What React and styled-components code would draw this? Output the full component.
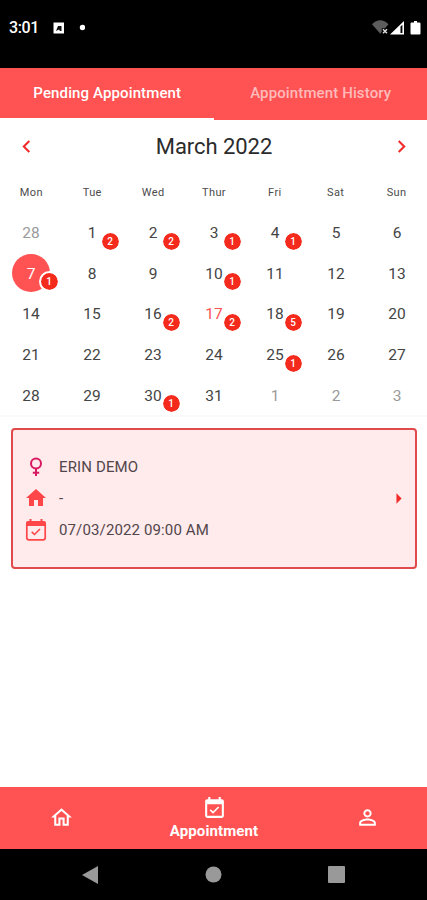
// =====================
// App.jsx
// Appointment screen: tabs, month calendar with badges, appointment card, bottom nav
// =====================

import React, { useState } from 'react';
import styled, { createGlobalStyle } from 'styled-components';
import {
  MdChevronLeft,
  MdChevronRight,
  MdHome,
  MdOutlineHome,
  MdPersonOutline,
  MdEventAvailable,
  MdArrowRight,
} from 'react-icons/md';

// --- Colours ---
const colors = {
  primary: '#ff5252',
  badge: '#f32a1c',
  arrow: '#f22b2b',
  cardBg: '#ffeaec',
  cardBorder: '#e04a4c',
  female: '#d81b60',
  text: '#444',
  muted: '#9a9a9a',
};

const GlobalStyle = createGlobalStyle`
  * { box-sizing: border-box; }
  body {
    margin: 0;
    background: #fff;
    font-family: Roboto, 'Liberation Sans', sans-serif;
  }
  button {
    font: inherit;
    color: inherit;
    background: none;
    border: none;
    padding: 0;
  }
  svg { display: block; flex-shrink: 0; }
`;

const Screen = styled.div`
  width: 427px;
  height: 900px;
  display: flex;
  flex-direction: column;
  overflow: hidden;
  background: #fff;
`;

// --- Android status bar ---
const StatusBar = styled.header`
  height: 68px;
  flex-shrink: 0;
  display: flex;
  align-items: flex-start;
  justify-content: space-between;
  padding: 18px 6px 0 9px;
  background: #000;
  color: #fff;
`;
const StatusGroup = styled.div`
  display: flex;
  align-items: center;
  height: 20px;
`;
const Clock = styled.span`
  width: 44px;
  font-size: 16px;
  font-weight: 500;
  letter-spacing: -0.4px;
  line-height: 20px;
`;

// --- Tabs ---
const Tabs = styled.div`
  height: 52px;
  flex-shrink: 0;
  display: flex;
  background: ${colors.primary};
`;
const Tab = styled.button`
  flex: 1;
  padding-left: 1px;
  border-bottom: 2px solid ${({ $active }) => ($active ? '#fff' : 'transparent')};
  color: ${({ $active }) => ($active ? '#fff' : '#ffbaba')};
  font-size: 15px;
  font-weight: 500;
  letter-spacing: 0.12px;
`;

// --- Calendar ---
const Calendar = styled.section`
  height: 297px;
  flex-shrink: 0;
  border-bottom: 2px solid #fafafa;
`;
const MonthRow = styled.div`
  height: 53px;
  display: flex;
  align-items: center;
  justify-content: space-between;
  padding: 0 13px 0 14px;
  color: ${colors.arrow};
`;
const MonthTitle = styled.h1`
  margin: 0;
  color: #2b2b2b;
  font-size: 22px;
  font-weight: 400;
  letter-spacing: -0.05px;
`;
const Week = styled.div`
  display: grid;
  grid-template-columns: repeat(7, 1fr);
  justify-items: center;
  align-items: center;
  height: 40.6px;
`;
const WeekNames = styled(Week)`
  height: 39px;
  padding-left: 1px;
  color: #4c4c4c;
  font-size: 11px;
  letter-spacing: 0.4px;
`;
const Day = styled.div`
  position: relative;
  display: flex;
  align-items: center;
  justify-content: center;
  width: 38px;
  height: 38px;
  padding: 2px 0 0 1px;
  border-radius: 50%;
  background: ${({ $selected }) => ($selected ? colors.primary : 'transparent')};
  color: ${({ $selected, $today, $outside }) =>
    $selected ? '#fff' : $today ? colors.primary : $outside ? colors.muted : colors.text};
  font-size: 15.5px;
`;
// count of appointments, sits over the day's lower right corner
const Badge = styled.span`
  position: absolute;
  left: 27px;
  top: 17.5px;
  width: 21px;
  height: 21px;
  display: flex;
  align-items: center;
  justify-content: center;
  border: 2px solid #fff;
  border-radius: 50%;
  background: ${colors.badge};
  background-clip: padding-box;
  color: #fff;
  font-size: 10px;
  font-weight: 500;
`;

// --- Appointment card ---
const Card = styled.article`
  display: flex;
  align-items: center;
  justify-content: space-between;
  height: 141px;
  margin: 11px 10px 0 11px;
  padding: 0 4px 0 11px;
  border: 2px solid ${colors.cardBorder};
  border-radius: 4px;
  background: ${colors.cardBg};
  color: ${colors.arrow};
`;
const Line = styled.div`
  display: flex;
  align-items: center;
  gap: 11px;
  height: 31.3px;
  color: #ff4648;
`;
const IconSlot = styled.span`
  width: 24px;
  display: flex;
  justify-content: center;
`;
const LineText = styled.span`
  color: #51464a;
  font-size: 15px;
  letter-spacing: 0.13px;
`;

// --- Bottom navigation ---
const BottomNav = styled.nav`
  height: 62px;
  flex-shrink: 0;
  margin-top: auto;
  display: flex;
  justify-content: space-between;
  padding: 0 9px 0 10px;
  background: ${colors.primary};
  color: #fff;
`;
const NavItem = styled.button`
  width: 102px;
  display: flex;
  flex-direction: column;
  align-items: center;
  justify-content: center;
  padding-bottom: ${({ $active }) => ($active ? 0 : '2px')};
`;
const NavLabel = styled.span`
  font-size: 15px;
  font-weight: 700;
  letter-spacing: 0.1px;
  line-height: 18px;
  margin-top: 1px;
`;

// --- Android system buttons ---
const SystemNav = styled.footer`
  height: 51px;
  flex-shrink: 0;
  display: flex;
  align-items: center;
  justify-content: space-between;
  padding: 0 82px 0 82px;
  background: #000;
`;

const weekNames = ['Mon', 'Tue', 'Wed', 'Thur', 'Fri', 'Sat', 'Sun'];
const weeks = [
  [28, 1, 2, 3, 4, 5, 6],
  [7, 8, 9, 10, 11, 12, 13],
  [14, 15, 16, 17, 18, 19, 20],
  [21, 22, 23, 24, 25, 26, 27],
  [28, 29, 30, 31, 1, 2, 3],
];
const counts = { 1: 2, 2: 2, 3: 1, 4: 1, 7: 1, 10: 1, 16: 2, 17: 2, 18: 5, 25: 1, 30: 1 };

const isOutside = (day, row) => (row === 0 && day > 20) || (row === 4 && day < 10);

function FemaleIcon() {
  return (
    <svg width="16" height="20" viewBox="0 0 16 20" fill="none" stroke={colors.female} strokeWidth="2">
      <circle cx="8" cy="6.500" r="5" />
      <path d="M8 11.500v7.500M4.800 15.800h6.400" />
    </svg>
  );
}

function CalendarCheckIcon() {
  return (
    <svg width="22" height="24" viewBox="0 0 22 24" fill="none" stroke="currentColor">
      <rect x="1.800" y="3.800" width="18.400" height="18" rx="2" strokeWidth="1.700" />
      <path d="M1.500 3.500h19v4.500h-19z" fill="currentColor" stroke="none" />
      <path d="M5.500 1v4M16.500 1v4" strokeWidth="2" />
      <path d="M6.700 13.800l2.800 2.700 5.500-5.500" strokeWidth="1.600" />
    </svg>
  );
}

function StatusIcons() {
  return (
    <svg width="50" height="18" viewBox="0 0 50 18">
      <path d="M1 5.200C6-.1 12.500-.1 17.500 5.200L14 9.200h-3.200v3.300L9.300 14.800z" fill="#5c5c5c" />
      <path d="M12 10.200l4 4M16 10.200l-4 4" stroke="#ddd" strokeWidth="1.500" />
      <path d="M19 15.500L33 2v13.500z" fill="#fff" />
      <path d="M29.500 7.500l1.900-1.800v8.300h-1.900z" fill="#000" />
      <path d="M43 2h3v1.500h2.500a1 1 0 0 1 1 1v10a1 1 0 0 1-1 1h-8a1 1 0 0 1-1-1v-10a1 1 0 0 1 1-1H43z" fill="#fff" />
    </svg>
  );
}

function App() {
  const [tab, setTab] = useState('pending');

  return (
    <>
      <GlobalStyle />
      <Screen>
        <StatusBar>
          <StatusGroup>
            <Clock>3:01</Clock>
            <svg width="32" height="12" viewBox="0 0 32 12">
              <path d="M0.500 0.500h10.500v11H0.500z" fill="#fff" />
              <path d="M3 9L5 4h3.500v5H7L6 7.500z" fill="#111" />
              <circle cx="29.500" cy="5.500" r="2.700" fill="#fff" />
            </svg>
          </StatusGroup>
          <StatusGroup>
            <StatusIcons />
          </StatusGroup>
        </StatusBar>

        <Tabs>
          <Tab $active={tab === 'pending'} onClick={() => setTab('pending')}>Pending Appointment</Tab>
          <Tab $active={tab === 'history'} onClick={() => setTab('history')}>Appointment History</Tab>
        </Tabs>

        <Calendar>
          <MonthRow>
            <MdChevronLeft size={25} />
            <MonthTitle>March 2022</MonthTitle>
            <MdChevronRight size={25} />
          </MonthRow>
          <WeekNames>
            {weekNames.map((name) => <span key={name}>{name}</span>)}
          </WeekNames>
          {weeks.map((week, row) => (
            <Week key={row}>
              {week.map((day) => {
                const outside = isOutside(day, row);
                return (
                  <Day key={day} $outside={outside} $selected={day === 7} $today={day === 17}>
                    {day}
                    {!outside && counts[day] && <Badge>{counts[day]}</Badge>}
                  </Day>
                );
              })}
            </Week>
          ))}
        </Calendar>

        <Card>
          <div>
            <Line>
              <IconSlot><FemaleIcon /></IconSlot>
              <LineText>ERIN DEMO</LineText>
            </Line>
            <Line>
              <IconSlot><MdHome size={24} /></IconSlot>
              <LineText>-</LineText>
            </Line>
            <Line>
              <IconSlot><CalendarCheckIcon /></IconSlot>
              <LineText>07/03/2022 09:00 AM</LineText>
            </Line>
          </div>
          <MdArrowRight size={25} />
        </Card>

        <BottomNav>
          <NavItem><MdOutlineHome size={25} /></NavItem>
          <NavItem $active>
            <MdEventAvailable size={25} />
            <NavLabel>Appointment</NavLabel>
          </NavItem>
          <NavItem><MdPersonOutline size={25} /></NavItem>
        </BottomNav>

        <SystemNav>
          <svg width="17" height="20" viewBox="0 0 17 20" fill="#999"><path d="M0 10L16 1v18z" /></svg>
          <svg width="17" height="17" viewBox="0 0 17 17" fill="#999"><circle cx="8.500" cy="8.500" r="8" /></svg>
          <svg width="17" height="17" viewBox="0 0 17 17" fill="#999"><rect width="17" height="17" rx="1" /></svg>
        </SystemNav>
      </Screen>
    </>
  );
}

export default App;
